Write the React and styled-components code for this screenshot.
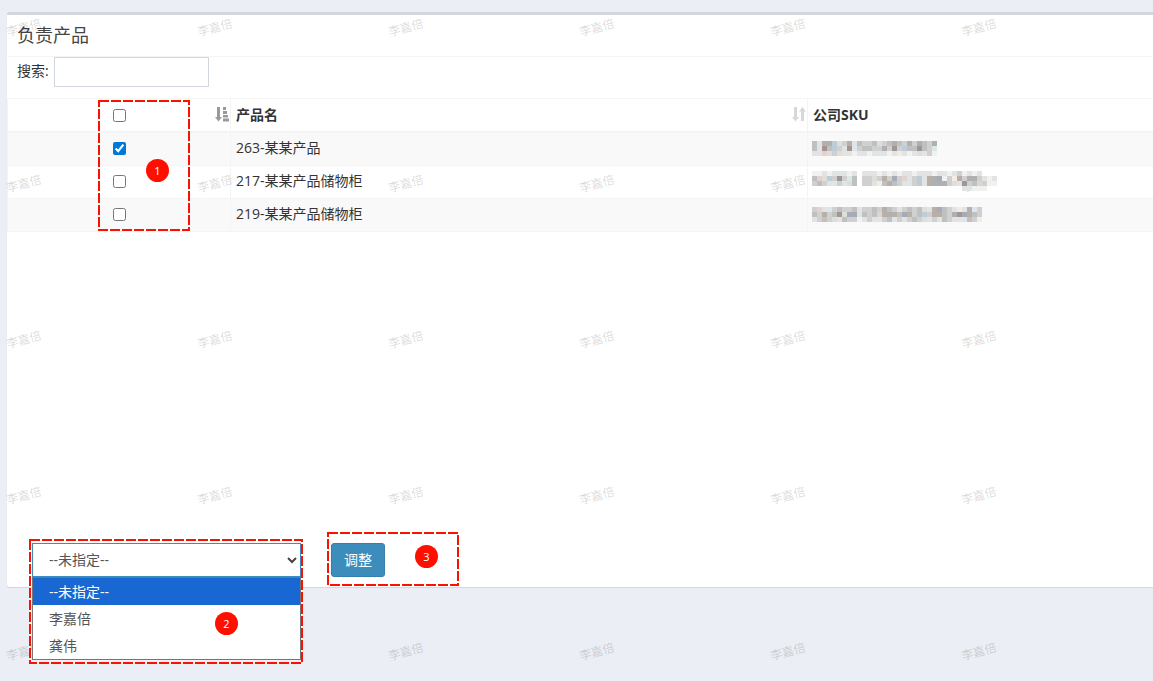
import React, { useState } from "react";
import styled, { createGlobalStyle } from "styled-components";

const Global = createGlobalStyle`
  *, *::before, *::after { box-sizing: border-box; }
  body {
    margin: 0;
    min-height: 100vh;
    background: #ebeef4;
    color: #333;
    font: 14px/20px "Open Sans", "Noto Sans CJK SC", sans-serif;
  }
`;

const Page = styled.main`
  position: relative;
  min-height: 100vh;
  overflow: hidden;
  padding: 12px 0 0 7px;
`;

const Panel = styled.section`
  background: #fff;
  border-top: 3px solid #d2d6de;
  border-radius: 3px 0 0 3px;
  box-shadow: 0 1px 1px rgba(0, 0, 0, 0.1);
`;

const PanelHeader = styled.header`
  padding: 10px;
  border-bottom: 1px solid #f4f4f4;
`;

const Title = styled.h3`
  margin: 0;
  font-size: 18px;
  line-height: 21px;
  font-weight: 400;
  color: #444;
`;

const SearchBar = styled.div`
  display: flex;
  align-items: flex-start;
  gap: 5px;
  padding: 0 10px 11px;
  line-height: 28px;
`;

const SearchInput = styled.input`
  width: 155px;
  height: 30px;
  padding: 5px 10px;
  border: 1px solid #d2d6de;
  font: inherit;
`;

const TableArea = styled.div`
  position: relative;
  min-height: 445px;
`;

const Table = styled.table`
  width: 100%;
  table-layout: fixed;
  border-collapse: separate;
  border-spacing: 0;
  border-top: 1px solid #f4f4f4;
  border-left: 1px solid #f4f4f4;
`;

const Row = styled.tr`
  height: 33px;
  background: ${(p) => (p.$striped ? "#f9f9f9" : "#fff")};
`;

const cell = `
  text-align: left;
  vertical-align: middle;
  border-right: 1px solid #f4f4f4;
  &:last-child { border-right: 0; }
`;

const HeadCell = styled.th`
  ${cell}
  width: ${(p) => p.$width || "auto"};
  height: 34px;
  padding: 0 5px;
  border-bottom: 2px solid #f4f4f4;
  font-weight: 700;
`;

const Cell = styled.td`
  ${cell}
  padding: 0 5px 2px;
  border-bottom: 1px solid #f4f4f4;
`;

const CheckLine = styled.div`
  display: flex;
  align-items: center;
  justify-content: space-between;
  padding-left: 100px;
  margin-right: -5px;
`;

const HeadLine = styled.div`
  display: flex;
  align-items: center;
  justify-content: space-between;
  margin-right: -5px;
`;

const Check = styled.input`
  display: block;
  width: 13px;
  height: 13px;
  margin: 0;
  accent-color: #0078d7;
`;

const SortSvg = styled.svg`
  display: block;
  width: 16px;
  height: 16px;
`;

const Mosaic = styled.svg`
  position: relative;
  z-index: 3;
  display: block;
  margin-left: -1px;
  background: ${(p) => (p.$striped ? "#f9f9f9" : "#fff")};
`;

const Actions = styled.form`
  display: flex;
  gap: 30px;
  padding: 0 25px 10px;
`;

const SelectWrap = styled.div`
  position: relative;
  z-index: 3;
  width: 269px;
  height: 34px;
`;

const Select = styled.select`
  appearance: none;
  display: block;
  width: 100%;
  height: 34px;
  padding: 0 16px;
  border: 1px solid #3c8dbc;
  border-radius: 0;
  background: #fff;
  color: #555;
  font: inherit;
`;

const Chevron = styled.svg`
  position: absolute;
  right: 4px;
  top: 13px;
  width: 10px;
  height: 8px;
  pointer-events: none;
`;

const Menu = styled.ul`
  position: absolute;
  top: 100%;
  left: 0;
  right: 0;
  margin: 0;
  padding: 0;
  list-style: none;
  background: #fff;
  border: 1px solid #767676;
`;

const MenuItem = styled.li`
  padding: 0 16px;
  line-height: 27px;
  color: ${(p) => (p.$active ? "#fff" : "#555")};
  background: ${(p) => (p.$active ? "#1967d2" : "transparent")};
`;

const ButtonWrap = styled.div`
  position: relative;
`;

const Button = styled.button`
  display: block;
  height: 34px;
  padding: 0 12px;
  border: 1px solid #367fa9;
  border-radius: 3px;
  background: #3c8dbc;
  color: #fff;
  font: inherit;
`;

const Frame = styled.svg`
  position: absolute;
  z-index: 4;
  left: ${(p) => p.$x}px;
  top: ${(p) => p.$y}px;
  pointer-events: none;
`;

const Badge = styled.span`
  position: absolute;
  z-index: 5;
  left: ${(p) => p.$x}px;
  top: ${(p) => p.$y}px;
  width: 23px;
  border-radius: 50%;
  background: #ff0f00;
  color: #fff;
  font-size: 11px;
  line-height: 23px;
  text-align: center;
`;

const Watermarks = styled.div`
  position: absolute;
  z-index: 2;
  inset: 0;
  overflow: hidden;
  display: grid;
  grid-template-columns: repeat(auto-fill, 191px);
  grid-auto-rows: 156px;
  pointer-events: none;
`;

const Mark = styled.span`
  justify-self: start;
  align-self: start;
  margin: 18px 0 0 6px;
  font-size: 12px;
  color: rgba(0, 0, 0, 0.16);
  transform: rotate(-15deg);
`;

function Highlight({ x, y, w, h }) {
  return (
    <Frame $x={x} $y={y} width={w} height={h} aria-hidden="true">
      <rect x="1" y="1" width={w - 2} height={h - 2} fill="none" stroke="#ff0f00" strokeWidth="2" strokeDasharray="10 2" />
    </Frame>
  );
}

function SortAsc() {
  return (
    <SortSvg viewBox="0 0 16 16" fill="#999" aria-hidden="true">
      <path d="M3 0h3v10h2l-3.500 4.500-3.500-4.500h2zM9 0h3v3H9zM9 4h4v3H9zM9 8h5v2.500H9zM9 11.500h6v3H9z" />
    </SortSvg>
  );
}

function SortBoth() {
  return (
    <SortSvg viewBox="0 0 16 16" fill="#d8d8d8" aria-hidden="true">
      <path d="M3 0h3v10h2l-3.500 4.500-3.500-4.500h2zM10 14h3V4.500h2l-3.500-4.500L8 4.500h2z" />
    </SortSvg>
  );
}

const tones = {
  a: "#f1f1f0", b: "#e2e3e3", c: "#d0d0d0", d: "#bfc0c0", e: "#b1b0b0", f: "#9c9696",
  p: "#e3d3d0", q: "#b9afa9", r: "#a39593", s: "#dce6eb", t: "#bdccd9", u: "#a5abb7", v: "#dedfd8", w: "#f2ece2",
};

const masks = {
  a: ["dbqetvcqbdccdvcdedcecedce", "dbrdtcbrscddccecrctddfdcs", "bbpvcvbbasbabsbabwbabvbca"],
  b: ["aababsbab.bbbabababbabbbabsabcabab...", "dpvtcfcsd.ccvcqcucpbctbqeuacwqceecbab", "cdcbscbvd.ccbwdqdcbsctbqeeecvsrcdpcaa", "..............................bbaaa.."],
  c: ["cpbscdccdb.cdcqdcbcdcdvbqudcbwbesc".replace(".", "c"), "dcqcdrvuub.cdpqeqduqcdtcqqdceruqdc".replace(".", "d"), "bcdcvbdcca.cbscdscbcdcvbcbdcbsbdcw".replace(".", "b")],
};

function HiddenSku({ kind, striped }) {
  const rows = masks[kind];
  return (
    <Mosaic $striped={striped} width="200" height={rows.length * 5} shapeRendering="crispEdges" role="img" aria-label="SKU">
      {rows.map((row, y) =>
        [...row].map((k, x) => k !== "." && <rect key={x + "-" + y} x={x * 5} y={y * 5} width="5" height="5" fill={tones[k]} />)
      )}
    </Mosaic>
  );
}

const products = [
  { name: "263-某某产品", sku: "a" },
  { name: "217-某某产品储物柜", sku: "b" },
  { name: "219-某某产品储物柜", sku: "c" },
];

const people = ["--未指定--", "李嘉倍", "龚伟"];

export default function App() {
  const [checked, setChecked] = useState([true, false, false]);
  const [person, setPerson] = useState(people[0]);
  const all = checked.every(Boolean);
  return (
    <Page>
      <Global />
      <Panel>
        <PanelHeader>
          <Title>负责产品</Title>
        </PanelHeader>
        <SearchBar>
          <label htmlFor="search">搜索:</label>
          <SearchInput id="search" type="text" />
        </SearchBar>
        <TableArea>
          <Table>
            <thead>
              <Row>
                <HeadCell $width="223px">
                  <CheckLine>
                    <Check type="checkbox" aria-label="全选" checked={all} onChange={() => setChecked(checked.map(() => !all))} />
                    <SortAsc />
                  </CheckLine>
                </HeadCell>
                <HeadCell $width="577px">
                  <HeadLine>
                    产品名
                    <SortBoth />
                  </HeadLine>
                </HeadCell>
                <HeadCell>公司SKU</HeadCell>
              </Row>
            </thead>
            <tbody>
              {products.map((p, i) => (
                <Row key={p.name} $striped={i % 2 === 0}>
                  <Cell>
                    <CheckLine>
                      <Check
                        type="checkbox"
                        aria-label={p.name}
                        checked={checked[i]}
                        onChange={() => setChecked(checked.map((c, j) => (j === i ? !c : c)))}
                      />
                    </CheckLine>
                  </Cell>
                  <Cell>{p.name}</Cell>
                  <Cell>
                    <HiddenSku kind={p.sku} striped={i % 2 === 0} />
                  </Cell>
                </Row>
              ))}
            </tbody>
          </Table>
          <Highlight x={91} y={2} w={92} h={131} />
          <Badge $x={139} $y={61}>1</Badge>
        </TableArea>
        <Actions onSubmit={(e) => e.preventDefault()}>
          <SelectWrap>
            <Select aria-label="负责人" value={person} onChange={(e) => setPerson(e.target.value)}>
              {people.map((p) => (
                <option key={p}>{p}</option>
              ))}
            </Select>
            <Chevron viewBox="0 0 10 8" aria-hidden="true">
              <path d="M1 2l4 4 4-4" fill="none" stroke="#444" strokeWidth="2" />
            </Chevron>
            <Menu>
              {people.map((p) => (
                <MenuItem key={p} $active={p === person} onClick={() => setPerson(p)}>
                  {p}
                </MenuItem>
              ))}
            </Menu>
            <Highlight x={-3} y={-4} w={274} h={125} />
            <Badge $x={183} $y={69}>2</Badge>
          </SelectWrap>
          <ButtonWrap>
            <Button type="submit">调整</Button>
            <Highlight x={-4} y={-11} w={132} h={54} />
            <Badge $x={84} $y={2}>3</Badge>
          </ButtonWrap>
        </Actions>
      </Panel>
      <Watermarks aria-hidden="true">
        {Array.from({ length: 30 }, (_, i) => (
          <Mark key={i}>李嘉倍</Mark>
        ))}
      </Watermarks>
    </Page>
  );
}
